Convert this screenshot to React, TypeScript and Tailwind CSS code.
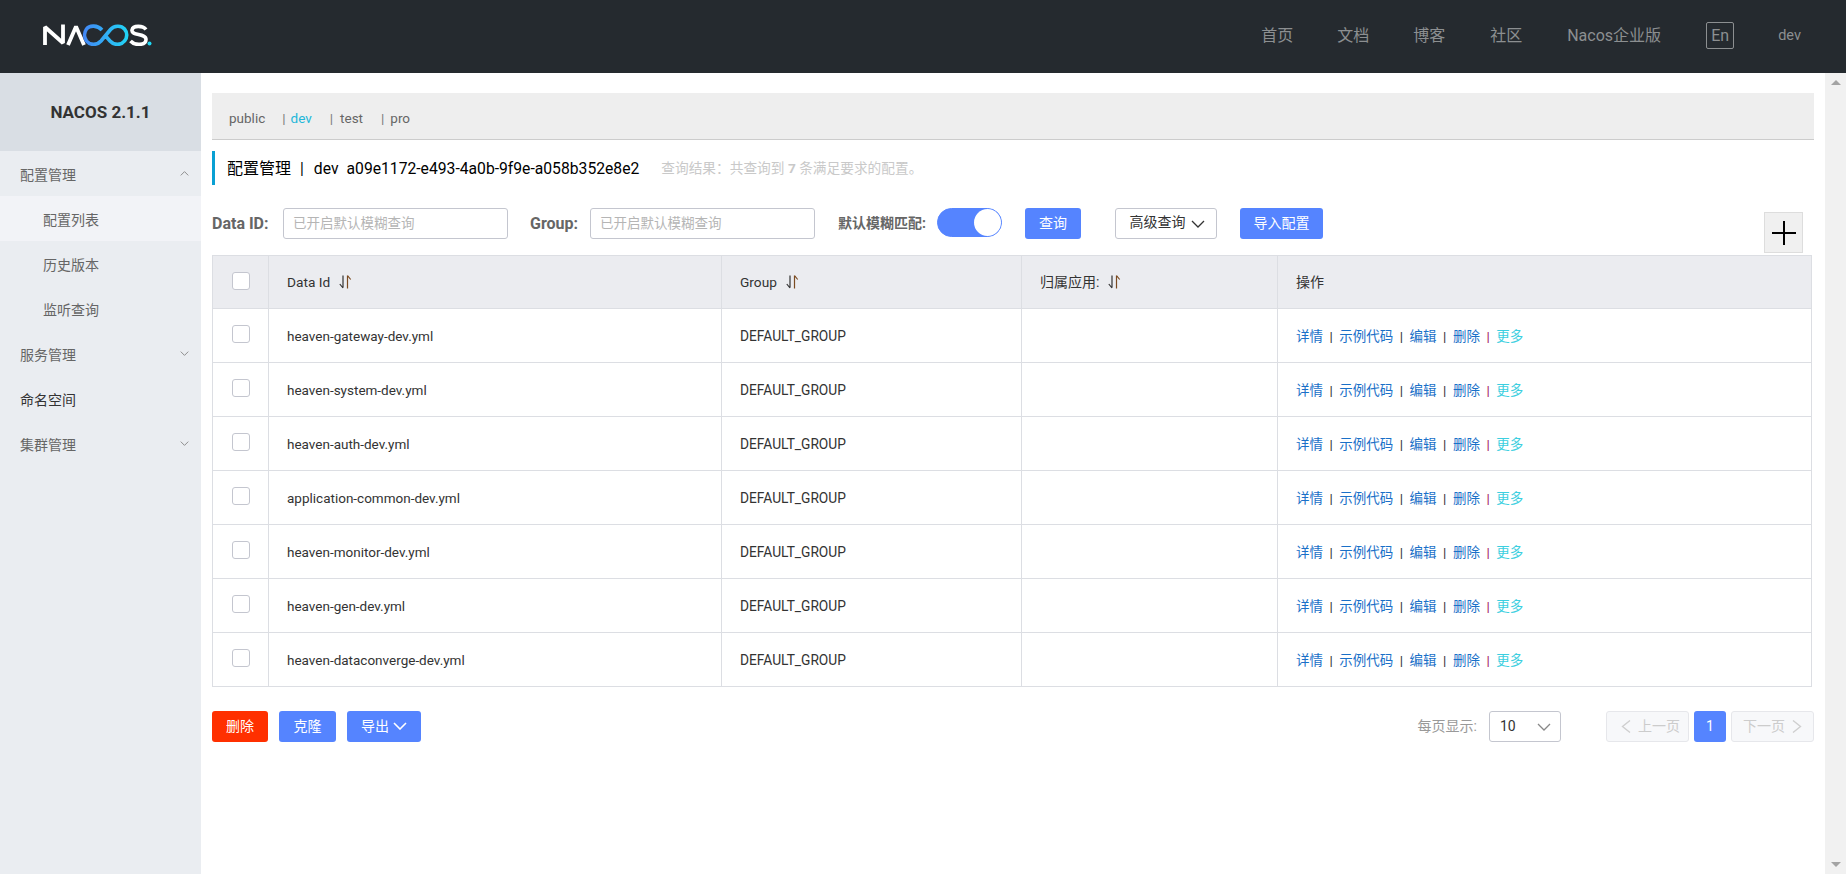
import React from "react";

const F = "font-['Roboto','Noto_Sans_CJK_SC',sans-serif]";

function Chevron({ className, up = false, color = "currentColor", w = 1.3 }: { className?: string; up?: boolean; color?: string; w?: number }) {
  return (
    <svg viewBox="0 0 14 8" className={className} fill="none" stroke={color} strokeWidth={w}>
      <path d={up ? "M1 7 7 1l6 6" : "M1 1l6 6 6-6"} />
    </svg>
  );
}

function Side({ left = false }: { left?: boolean }) {
  return (
    <svg width="10" height="13" viewBox="0 0 10 13" fill="none" stroke="#cfcfcf" strokeWidth="1.4" className="shrink-0">
      <path d={left ? "M9 0.500 1.500 6.500 9 12.500" : "M1 0.500 8.500 6.500 1 12.500"} />
    </svg>
  );
}

function Sort() {
  return (
    <svg width="13" height="14" viewBox="0 0 13 14" fill="none" stroke="#333" strokeWidth="1.2" className="ml-[9px] mb-[1px]">
      <path d="M4 0.500v12M4 13 0.800 9" />
      <path d="M8.500 13.500v-13M8.500 0.500l3.200 4" stroke="#7a4a20" />
    </svg>
  );
}

function Logo() {
  return (
    <svg width="110" height="22" viewBox="0 0 110 22" fill="none" className="block mb-[3px]">
      <defs>
        <linearGradient id="lg" gradientUnits="userSpaceOnUse" x1="40" x2="87" y1="0" y2="0">
          <stop offset="0" stopColor="#4386f5" />
          <stop offset="1" stopColor="#1fd8f5" />
        </linearGradient>
      </defs>
      <path d="M2 21V3L20 19V0.500" stroke="#fff" strokeWidth="3.800" strokeMiterlimit="1.500" />
      <path d="M25 21 33 2.500 41 21" stroke="#fff" strokeWidth="3.800" strokeMiterlimit="1.500" />
      <path d="M59 6C54.500 1 46.500 1 43.500 5 41 8.500 41 13.500 43.500 17 47 21.500 54 21.500 58 17L67.500 5.500C71 1.500 78 1 81.500 5 84.500 8.500 84.500 13.500 81.500 17 78 21.500 71 21.500 67 17L63.500 13" stroke="url(#lg)" strokeWidth="3.600" />
      <path d="M103 5.500C100 1.500 90 1 89 6 88 12 103 9 103 15.500 103 21.500 92 22 87.500 17" stroke="#fff" strokeWidth="3.600" />
      <circle cx="106.500" cy="19.500" r="2" fill="#1fd8f5" />
    </svg>
  );
}

function Btn({ className = "", children }: { className?: string; children: React.ReactNode }) {
  return (
    <button className={`h-[31px] rounded-[3px] text-[14px] flex items-center justify-center ${className}`}>{children}</button>
  );
}

function Check() {
  return <span className="block w-[18px] h-[18px] mb-[3px] rounded-[3px] border border-[#c4c6cf] bg-white" />;
}

const rows = [
  "heaven-gateway-dev.yml",
  "heaven-system-dev.yml",
  "heaven-auth-dev.yml",
  "application-common-dev.yml",
  "heaven-monitor-dev.yml",
  "heaven-gen-dev.yml",
  "heaven-dataconverge-dev.yml",
];

const cols = "grid grid-cols-[55px_453px_300px_256px_1fr]";

function Sep() {
  return <span className="mx-[6.500px] text-[#333]">|</span>;
}

export default function App() {
  return (
    <div className={`${F} h-[874px] w-[1846px] overflow-hidden flex flex-col bg-white text-[14px] text-[#333]`}>
      <header className="h-[73px] shrink-0 bg-[#252a2f] flex items-center pl-[43px] text-[#8c8f91]">
        <Logo />
        <nav className="ml-auto flex items-center text-[16px] mb-[2px]">
          <span className="w-[76px]">首页</span>
          <span className="w-[76px]">文档</span>
          <span className="w-[77px]">博客</span>
          <span className="w-[77px]">社区</span>
          <span className="w-[139px]">Nacos企业版</span>
          <span className="w-[28px] h-[27px] border border-[#8c8f91] rounded-[2px] flex items-center justify-center">En</span>
          <span className="ml-[44px] mr-[45px] text-[14.500px]">dev</span>
        </nav>
      </header>
      <div className="flex flex-1 min-h-0">
        <aside className="w-[201px] shrink-0 bg-[#eaedf1] text-[#666]">
          <div className="h-[78px] bg-[#d9dee4] flex items-center justify-center font-bold text-[17px] text-[#333] pt-[1px]">NACOS 2.1.1</div>
          <div className="h-[45px] flex items-center justify-between pl-[20px] pr-[12px]"><span className="pt-[3px]">配置管理</span><Chevron up className="w-[9px] h-[5px]" color="#888" w={1.5} /></div>
          <div className="h-[45px] flex items-center pl-[43px] pt-[3px] bg-[#f2f3f7]">配置列表</div>
          <div className="h-[45px] flex items-center pl-[43px] pt-[3px]">历史版本</div>
          <div className="h-[45px] flex items-center pl-[43px] pt-[3px]">监听查询</div>
          <div className="h-[45px] flex items-center justify-between pl-[20px] pr-[12px]"><span className="pt-[3px]">服务管理</span><Chevron className="w-[9px] h-[5px]" color="#888" w={1.5} /></div>
          <div className="h-[45px] flex items-center pl-[20px] pt-[3px] text-[#333]">命名空间</div>
          <div className="h-[45px] flex items-center justify-between pl-[20px] pr-[12px]"><span className="pt-[3px]">集群管理</span><Chevron className="w-[9px] h-[5px]" color="#888" w={1.5} /></div>
        </aside>
        <main className="flex-1 min-w-0 pl-[11px] pt-[20px] pr-[11px] relative">
          <div className="h-[47px] bg-[#eeeeee] border-b border-[#cccccc] flex items-center pl-[17px] text-[#666] pt-[5px] text-[13.500px]">
            <span>public</span>
            <span className="ml-[17px] text-[#7a7a7a]">|</span><span className="ml-[5px] text-[#23b7d9]">dev</span>
            <span className="ml-[18px] text-[#7a7a7a]">|</span><span className="ml-[7px]">test</span>
            <span className="ml-[18px] text-[#7a7a7a]">|</span><span className="ml-[6px]">pro</span>
          </div>
          <div className="mt-[11px] h-[34px] border-l-[3px] border-[#09a0d3] pl-[12px] flex items-center text-[#000] text-[15.700px] pt-[1px]">
            <span className="text-[16px]">配置管理</span><span className="ml-[9px] mr-[10px]">|</span><span>dev</span>
            <span className="ml-[8px]">a09e1172-e493-4a0b-9f9e-a058b352e8e2</span>
            <span className="ml-[22px] text-[13.700px] text-[#c9c9c9]">查询结果：共查询到 <b>7</b> 条满足要求的配置。</span>
          </div>
          <div className="mt-[23px] h-[31px] flex items-center">
            <b className="w-[71px] text-[#666] text-[16px]">Data ID:</b>
            <div className="w-[225px] h-[31px] border border-[#c4c6cf] rounded-[3px] pl-[9px] flex items-center text-[13.500px] text-[#b5b5b5]">已开启默认模糊查询</div>
            <b className="ml-[22px] w-[60px] text-[#666] text-[16px]">Group:</b>
            <div className="w-[225px] h-[31px] border border-[#c4c6cf] rounded-[3px] pl-[9px] flex items-center text-[13.500px] text-[#b5b5b5]">已开启默认模糊查询</div>
            <b className="ml-[23px] w-[99px] text-[#666] text-[14px]">默认模糊匹配:</b>
            <div className="w-[65px] h-[29px] rounded-full bg-[#5584ff] border border-[#5584ff] flex items-center justify-end mb-[2px]"><span className="w-[27px] h-[27px] rounded-full bg-white" /></div>
            <Btn className="ml-[23px] w-[56px] bg-[#5584ff] text-white">查询</Btn>
            <Btn className="ml-[34px] w-[102px] border border-[#c4c6cf] text-[#333] bg-white gap-[5px] pl-[2px]"><span className="pb-[2px]">高级查询</span><Chevron className="w-[14px] h-[8px]" /></Btn>
            <Btn className="ml-[23px] w-[83px] bg-[#5584ff] text-white">导入配置</Btn>
          </div>
          <div className="absolute left-[1563px] top-[139px] w-[39px] h-[41px] bg-[#f0f0f0] border border-[#dddddd] flex items-center justify-center">
            <svg width="24" height="24" viewBox="0 0 24 24" stroke="#000" strokeWidth="2"><path d="M0 12h24M12 0v24" /></svg>
          </div>
          <div className="mt-[16px] w-[1600px] border-l border-r border-[#dcdee3]">
            <div className={`${cols} h-[54px] bg-[#ebecf0] border-t border-b border-[#dcdee3] text-[13.700px]`}>
              <div className="flex items-center justify-center"><Check /></div>
              <div className="flex items-center pl-[18px] border-l border-[#dcdee3]">Data Id<Sort /></div>
              <div className="flex items-center pl-[18px] border-l border-[#dcdee3]">Group<Sort /></div>
              <div className="flex items-center pl-[18px] border-l border-[#dcdee3]"><span className="text-[14px]">归属应用:</span><Sort /></div>
              <div className="flex items-center pl-[18px] border-l border-[#dcdee3] text-[14px]">操作</div>
            </div>
            {rows.map((r) => (
              <div key={r} className={`${cols} h-[54px] border-b border-[#dcdee3]`}>
                <div className="flex items-center justify-center"><Check /></div>
                <div className="flex items-center pl-[18px] pt-[1px] border-l border-[#dcdee3] text-[13.500px]">{r}</div>
                <div className="flex items-center pl-[18px] pt-[1px] border-l border-[#dcdee3] text-[13.750px]">DEFAULT_GROUP</div>
                <div className="border-l border-[#dcdee3]" />
                <div className="flex items-center pl-[18px] pt-[1px] border-l border-[#dcdee3] text-[#1a70c8] text-[13.500px]">
                  详情<Sep />示例代码<Sep />编辑<Sep />删除<span className="mx-[6.500px] text-[#a01060]">|</span><span className="text-[#3ccfe0]">更多</span>
                </div>
              </div>
            ))}
          </div>
          <div className="mt-[24px] h-[31px] flex items-center">
            <Btn className="w-[56px] bg-[#ff3000] text-white">删除</Btn>
            <Btn className="ml-[11px] w-[57px] bg-[#5584ff] text-white">克隆</Btn>
            <Btn className="ml-[11px] w-[74px] bg-[#5584ff] text-white gap-[4px]">导出<Chevron className="w-[14px] h-[8px] mb-[2px]" w={1.6} /></Btn>
            <span className="ml-auto text-[#999]">每页显示:</span>
            <div className="ml-[12px] w-[72px] h-[31px] border border-[#c4c6cf] rounded-[3px] flex items-center justify-between pl-[10px] pr-[9px]">10<Chevron className="w-[14px] h-[8px]" color="#888" /></div>
            <Btn className="ml-[45px] w-[83px] bg-[#f7f8fa] border border-[#e6e7eb] text-[#ccc] text-[13.500px] gap-[7px] pl-[6px]"><Side left />上一页</Btn>
            <Btn className="ml-[5px] w-[32px] bg-[#5584ff] text-white">1</Btn>
            <Btn className="ml-[5px] w-[83px] bg-[#f7f8fa] border border-[#e6e7eb] text-[#ccc] text-[13.500px] gap-[7px]">下一页<Side /></Btn>
          </div>
        </main>
        <div className="w-[21px] shrink-0 bg-[#f1f1f1] flex flex-col items-center justify-between py-[7px]">
          <span className="w-0 h-0 border-x-[5px] border-x-transparent border-b-[5px] border-b-[#a3a3a3]" />
          <span className="w-0 h-0 border-x-[5px] border-x-transparent border-t-[5px] border-t-[#a3a3a3]" />
        </div>
      </div>
    </div>
  );
}
